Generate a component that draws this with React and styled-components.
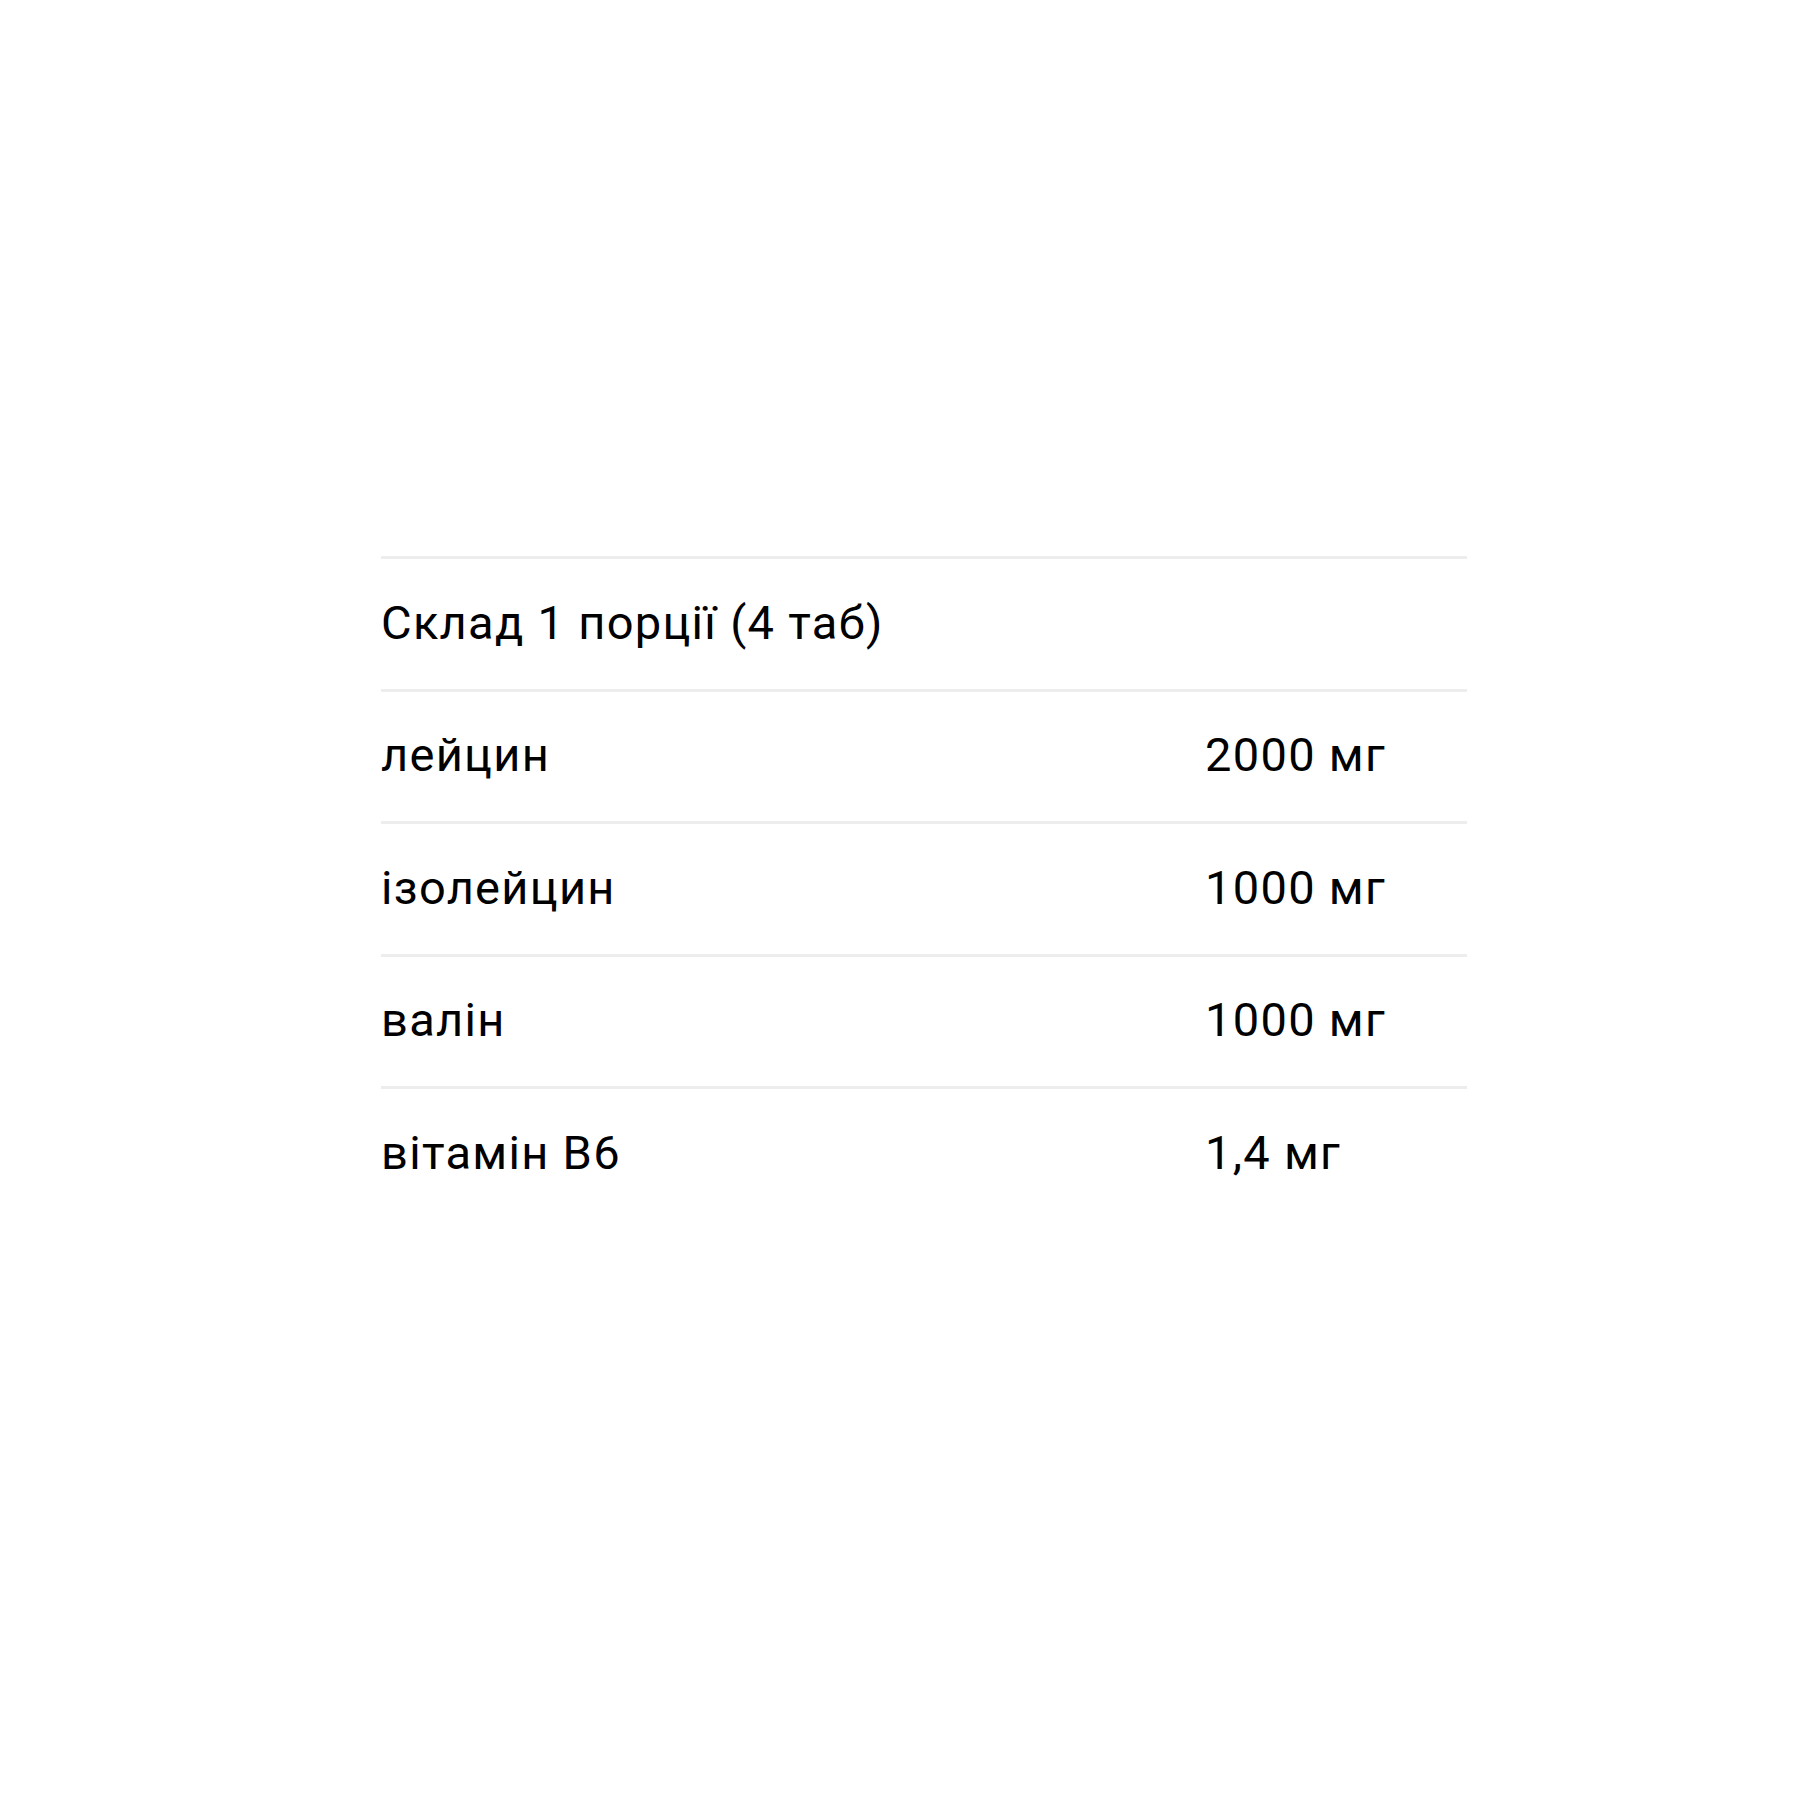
import React from 'react';
import styled, { createGlobalStyle } from 'styled-components';

const GlobalStyle = createGlobalStyle`
  body {
    margin: 0;
    background: #fff;
    font-family: Roboto, "Liberation Sans", sans-serif;
  }
`;

const Page = styled.div`
  width: 1800px;
  height: 1800px;
  padding: 556px 0 0 381px;
  box-sizing: border-box;
`;

const Table = styled.div`
  width: 1086px;
  display: flex;
  flex-direction: column;
`;

const Row = styled.div`
  display: grid;
  grid-template-columns: 824px 1fr;
  align-items: center;
  height: 132.5px;
  padding-bottom: 3px;
  box-sizing: border-box;
  border-top: 3px solid #ededed;
  font-size: 47px;
  letter-spacing: 1.3px;
  color: #000;
`;

const Cell = styled.div`
  white-space: nowrap;
  grid-column: ${(p) => (p.$span ? '1 / -1' : 'auto')};
`;

const rows = [
  ['лейцин', '2000 мг'],
  ['ізолейцин', '1000 мг'],
  ['валін', '1000 мг'],
  ['вітамін В6', '1,4 мг'],
];

const App = () => (
  <>
    <GlobalStyle />
    <Page>
      <Table>
        <Row>
          <Cell $span>Склад 1 порції (4 таб)</Cell>
        </Row>
        {rows.map(([name, value]) => (
          <Row key={name}>
            <Cell>{name}</Cell>
            <Cell>{value}</Cell>
          </Row>
        ))}
      </Table>
    </Page>
  </>
);

export default App;
